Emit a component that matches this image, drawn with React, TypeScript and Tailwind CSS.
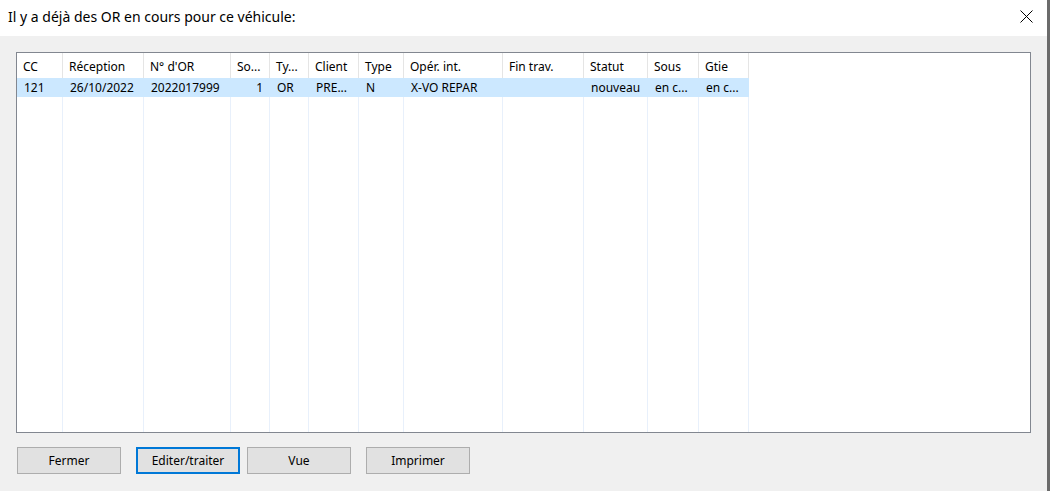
import React from "react";

type Col = { h: string; v: string; w: number; right?: boolean };

const cols: Col[] = [
  { h: "CC", v: "121", w: 46 },
  { h: "Réception", v: "26/10/2022", w: 81 },
  { h: "N° d'OR", v: "2022017999", w: 87 },
  { h: "So...", v: "1", w: 39, right: true },
  { h: "Ty...", v: "OR", w: 39 },
  { h: "Client", v: "PRE...", w: 50 },
  { h: "Type", v: "N", w: 45 },
  { h: "Opér. int.", v: "X-VO REPAR", w: 99 },
  { h: "Fin trav.", v: "", w: 81 },
  { h: "Statut", v: "nouveau", w: 64 },
  { h: "Sous", v: "en c...", w: 51 },
  { h: "Gtie", v: "en c...", w: 50 },
];

const font = { fontFamily: '"Segoe UI", "Noto Sans", Arial, sans-serif' };

function Btn({ label, focus, className }: { label: string; focus?: boolean; className?: string }) {
  return (
    <div
      className={
        "w-[104px] h-[27px] flex items-center justify-center bg-[#e1e1e1] text-[12px] text-black " +
        (focus ? "border-2 border-[#0078d7] " : "border border-[#adadad] ") +
        (className ?? "")
      }
    >
      {label}
    </div>
  );
}

export default function App() {
  return (
    <div className="w-[1050px] h-[491px] flex bg-[#f0f0f0] overflow-hidden" style={font}>
      <div className="flex-1 flex flex-col">
        <div className="h-[36px] bg-white flex items-center justify-between pl-[8px] pr-[14px]">
          <span className="text-[14px] text-[#000] leading-none pb-[2px]">
            Il y a déjà des OR en cours pour ce véhicule:
          </span>
          <svg width="13" height="13" viewBox="0 0 13 13" className="mb-[4px]">
            <path d="M0.5 0.5 L12.5 12.5 M12.5 0.5 L0.5 12.5" stroke="#000" strokeWidth="1" />
          </svg>
        </div>
        <div className="flex-1 flex flex-col pl-[16px] pr-[16px] pt-[16px]">
          <div className="w-[1015px] h-[381px] border border-[#828790] bg-white flex">
            {cols.map((c, i) => (
              <div key={i} className="flex flex-col" style={{ width: c.w }}>
                <div className="h-[25px] flex items-center px-[6px] pt-[2px] text-[12px] border-r border-[#e5e5e5] whitespace-nowrap overflow-hidden">
                  {c.h}
                </div>
                <div
                  className={
                    "h-[19px] flex items-center bg-[#cce8ff] px-[7px] text-[12px] whitespace-nowrap overflow-hidden " +
                    (c.right ? "justify-end" : "")
                  }
                >
                  {c.v}
                </div>
                <div className="flex-1 border-r border-[#e8f0fb]" />
              </div>
            ))}
            <div className="flex-1" />
          </div>
          <div className="flex mt-[14px] ml-[1px]">
            <Btn label="Fermer" />
            <Btn label="Editer/traiter" focus className="ml-[15px]" />
            <Btn label="Vue" className="ml-[7px]" />
            <Btn label="Imprimer" className="ml-[15px]" />
          </div>
        </div>
      </div>
      <div className="w-[3px] bg-[#6b6b6b]" />
    </div>
  );
}
